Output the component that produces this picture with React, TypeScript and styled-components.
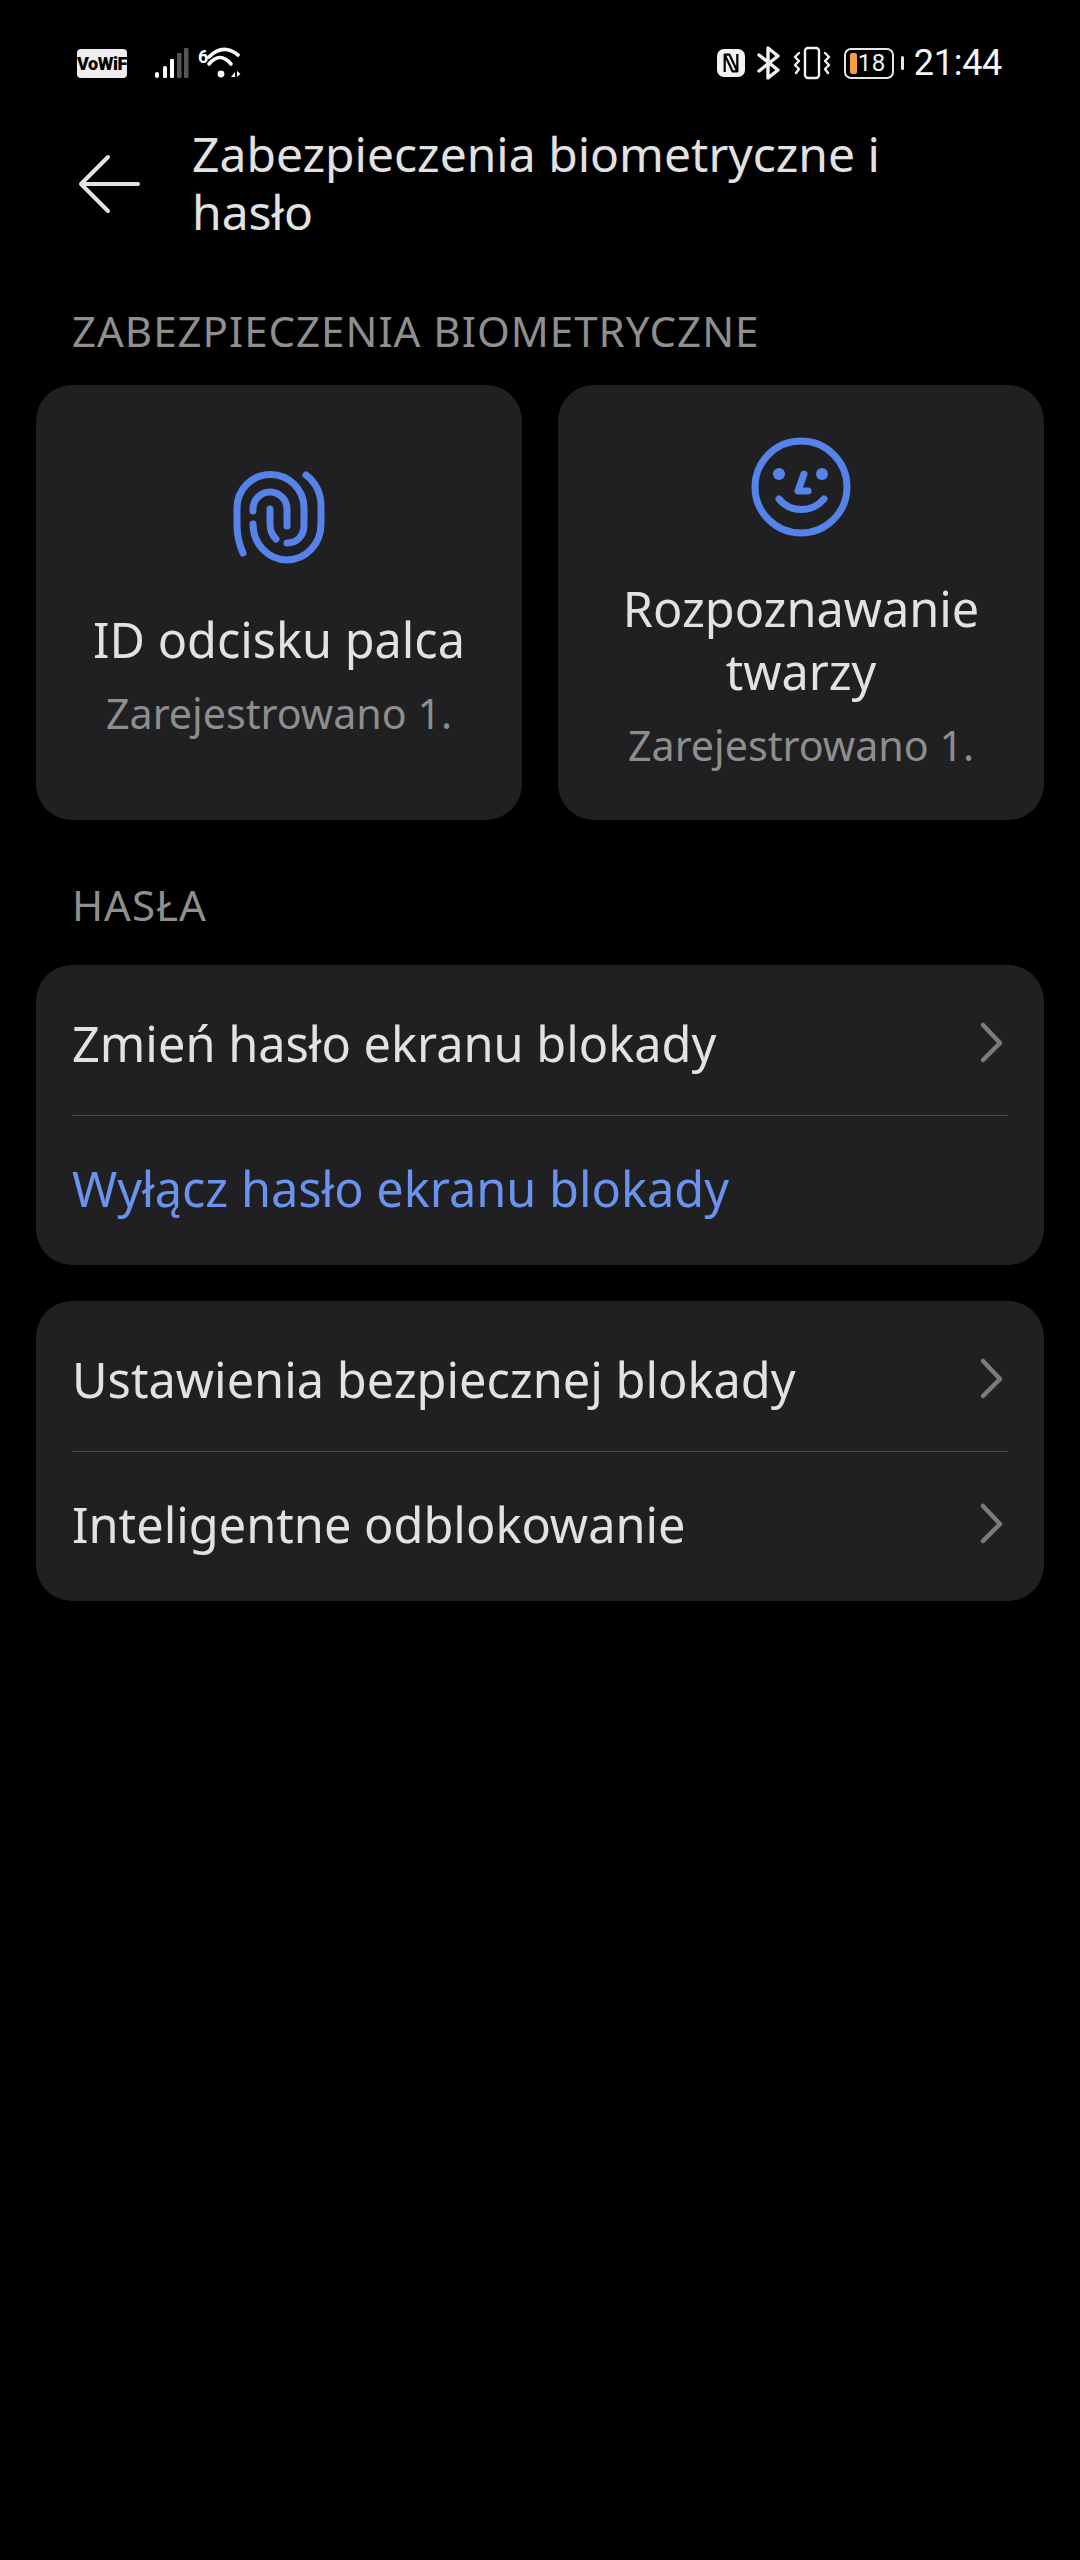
import * as React from 'react';
import styled, { createGlobalStyle } from 'styled-components';

const GlobalStyle = createGlobalStyle`
  html, body {
    margin: 0;
    padding: 0;
    background: #000;
  }
  body {
    font-family: "Noto Sans", Roboto, sans-serif;
  }
`;

const Page = styled.div`
  width: 1080px;
  height: 2560px;
  background: #000;
  overflow: hidden;
`;

const StatusBar = styled.div`
  display: flex;
  justify-content: space-between;
  align-items: center;
  height: 126px;
  padding: 0 78px 0 77px;
  box-sizing: border-box;
  color: #fff;
`;

const StatusGroup = styled.div`
  display: flex;
  align-items: center;
`;

const VoWifiBadge = styled.span`
  width: 50px;
  height: 29px;
  margin-right: 28px;
  border-radius: 4px;
  background: #eee;
  color: #000;
  font-family: Roboto, sans-serif;
  font-size: 18px;
  font-weight: 900;
  letter-spacing: -0.4px;
  line-height: 29px;
  text-align: center;
`;

const WifiBox = styled.div`
  position: relative;
  width: 46px;
  height: 34px;
  margin-left: 9px;
`;

const WifiSix = styled.span`
  position: absolute;
  left: 0;
  top: 2px;
  font-family: Roboto, sans-serif;
  font-size: 18px;
  font-weight: 700;
  line-height: 18px;
`;

const Battery = styled.div`
  position: relative;
  width: 50px;
  height: 31px;
  margin: 0 7px 0 13px;
  box-sizing: border-box;
  border: 2.5px solid #e6e6e6;
  border-radius: 7px;
`;

const BatteryFill = styled.span`
  position: absolute;
  left: 4px;
  top: 3px;
  bottom: 3px;
  width: 7px;
  border-radius: 2px;
  background: #f0a040;
`;

const BatteryLevel = styled.span`
  position: absolute;
  left: 12px;
  top: 0;
  font-family: Roboto, sans-serif;
  font-size: 24px;
  line-height: 26px;
  letter-spacing: 0.5px;
  color: #f2f2f2;
`;

const BatteryNub = styled.span`
  width: 3px;
  height: 14px;
  margin-right: 10px;
  border-radius: 2px;
  background: #e6e6e6;
`;

const Clock = styled.span`
  font-family: Roboto, sans-serif;
  font-size: 36px;
  letter-spacing: -0.3px;
  line-height: 40px;
  color: #f5f5f5;
`;

const Header = styled.header`
  display: flex;
  align-items: center;
  height: 116px;
  padding-left: 78px;
`;

const BackIcon = styled.svg`
  width: 64px;
  height: 60px;
  margin-right: 50px;
  flex: none;
`;

const Title = styled.h1`
  margin: 0 0 2px;
  width: 750px;
  font-size: 48px;
  font-weight: 400;
  line-height: 58px;
  color: #e2e2e2;
`;

const SectionLabel = styled.div<{ $top: number }>`
  margin: ${p => p.$top}px 0 0;
  padding-left: 72px;
  height: 50px;
  font-size: 42px;
  letter-spacing: 1px;
  line-height: 48px;
  color: #8f8f8f;
`;

const BioGrid = styled.div`
  display: grid;
  grid-template-columns: 1fr 1fr;
  gap: 36px;
  margin: 28px 36px 0;
`;

const BioCard = styled.div`
  display: flex;
  flex-direction: column;
  align-items: center;
  justify-content: center;
  height: 435px;
  padding-top: 3px;
  box-sizing: border-box;
  border-radius: 36px;
  background: #202022;
  text-align: center;
`;

const BioIcon = styled.svg`
  width: 100px;
  height: 100px;
  margin-bottom: 40px;
  flex: none;
`;

const BioTitle = styled.div`
  width: 440px;
  font-size: 48.6px;
  line-height: 63px;
  color: #e2e2e2;
`;

const BioSub = styled.div`
  margin-top: 15px;
  font-size: 41.2px;
  line-height: 54px;
  color: #8e8e8e;
`;

const ListCard = styled.div<{ $top: number }>`
  margin: ${p => p.$top}px 36px 0;
  border-radius: 36px;
  background: #202022;
`;

const Row = styled.div`
  display: flex;
  align-items: center;
  justify-content: space-between;
  height: 150px;
  margin: 0 36px;
  box-sizing: border-box;
  &:first-child {
    padding-top: 5px;
  }
  &:last-child {
    padding-bottom: 6px;
    border-top: 1px solid #4a4a4c;
  }
`;

const RowText = styled.span<{ $accent?: boolean }>`
  font-size: 48.7px;
  color: ${p => (p.$accent ? '#6a93ee' : '#e2e2e2')};
`;

const Chevron = styled.svg`
  width: 30px;
  height: 44px;
  flex: none;
`;

const Arrow = () => (
  <Chevron viewBox="0 0 30 44" fill="none" stroke="#7b7b7b" strokeWidth="4.5" strokeLinecap="round" strokeLinejoin="round">
    <path d="M5 4 L22 22 L5 39" />
  </Chevron>
);

const SignalIcon = () => (
  <svg width="34" height="30" viewBox="0 0 34 30">
    <rect x="0" y="24" width="4" height="6" rx="2" fill="#fff" />
    <rect x="8" y="18" width="4" height="12" rx="1.5" fill="#fff" />
    <rect x="15" y="11" width="4" height="19" rx="1" fill="#fff" />
    <rect x="22" y="5" width="4.5" height="25" rx="1" fill="#555" />
    <rect x="29" y="0" width="4.5" height="30" rx="1" fill="#555" />
  </svg>
);

const WifiIcon = () => (
  <svg width="46" height="34" viewBox="0 0 46 34" fill="none" stroke="#fff" strokeWidth="3.6" strokeLinecap="round" style={{ position: 'absolute', left: 0, top: 0 }}>
    <path d="M11 11 Q25 -3 40 9" />
    <path d="M11 18 Q22 5 33 18" />
    <circle cx="23" cy="28" r="3.4" fill="#fff" stroke="none" />
    <path d="M33 31 L37 26 V31 Z M39 25 V31 L42.5 28 Z" fill="#fff" stroke="none" />
  </svg>
);

const NfcIcon = () => (
  <svg width="28" height="28" viewBox="0 0 28 28" fill="none" stroke="#000" strokeWidth="2.2" strokeLinejoin="round" style={{ marginRight: 12 }}>
    <rect width="28" height="28" rx="7" fill="#f2f2f2" stroke="none" />
    <path d="M7.7 23 V5.7 H12.5 L20.3 22.3 H15.5 L7.7 5.7" />
    <path d="M20.3 5 V22.3" />
  </svg>
);

const BluetoothIcon = () => (
  <svg width="24" height="34" viewBox="0 0 24 34" fill="none" stroke="#f2f2f2" strokeWidth="3.4" strokeLinejoin="round" strokeLinecap="round" style={{ marginRight: 12 }}>
    <path d="M2 9 L21 24 L11 32 V2 L21 10 L2 25" />
  </svg>
);

const VibrateIcon = () => (
  <svg width="38" height="34" viewBox="0 0 38 34" fill="none" stroke="#f2f2f2" strokeWidth="2.4" strokeLinecap="round" strokeLinejoin="round">
    <rect x="12" y="2" width="14" height="30" rx="3" />
    <path d="M6 7 L2 11 L6 15 L2 19 L6 23 L3 27" />
    <path d="M32 7 L36 11 L32 15 L36 19 L32 23 L35 27" />
  </svg>
);

export default function App() {
  return (
    <Page>
      <GlobalStyle />
      <StatusBar>
        <StatusGroup>
          <VoWifiBadge>VoWiFi</VoWifiBadge>
          <SignalIcon />
          <WifiBox>
            <WifiSix>6</WifiSix>
            <WifiIcon />
          </WifiBox>
        </StatusGroup>
        <StatusGroup>
          <NfcIcon />
          <BluetoothIcon />
          <VibrateIcon />
          <Battery>
            <BatteryFill />
            <BatteryLevel>18</BatteryLevel>
          </Battery>
          <BatteryNub />
          <Clock>21:44</Clock>
        </StatusGroup>
      </StatusBar>

      <Header>
        <BackIcon viewBox="0 0 64 60" fill="none" stroke="#e4e4e4" strokeWidth="4" strokeLinecap="round" strokeLinejoin="round">
          <path d="M3 30 H60 M30 3 L3 30 L30 57" />
        </BackIcon>
        <Title>Zabezpieczenia biometryczne i hasło</Title>
      </Header>

      <SectionLabel $top={65}>ZABEZPIECZENIA BIOMETRYCZNE</SectionLabel>
      <BioGrid>
        <BioCard>
          <BioIcon viewBox="30 28 100 100" fill="none" stroke="#5583ea" strokeWidth="7" strokeLinecap="round">
            <path d="M44 113 C40 104 38 94 38 85 V68 A33.5 33.5 0 0 1 105 68 V85 C105 96 98 103 88 103" />
            <path d="M107 35 C116 42 122 52 122 66 V84 A34 36 0 0 1 54 84" />
            <path d="M54 71 V69 A17 17 0 0 1 88 69 V86" />
            <path d="M71 69 V84 C71 90 73 95 77 99" />
          </BioIcon>
          <BioTitle>ID odcisku palca</BioTitle>
          <BioSub>Zarejestrowano 1.</BioSub>
        </BioCard>
        <BioCard>
          <BioIcon viewBox="31 26 100 100" fill="none" stroke="#5583ea" strokeWidth="7" strokeLinecap="round" strokeLinejoin="round">
            <circle cx="81" cy="76" r="46" />
            <circle cx="59" cy="63" r="6" fill="#5583ea" stroke="none" />
            <circle cx="102" cy="63" r="6" fill="#5583ea" stroke="none" />
            <path d="M84 63 L78 80 H88" />
            <path d="M59 88 C70 102 92 102 104 88" />
          </BioIcon>
          <BioTitle>Rozpoznawanie twarzy</BioTitle>
          <BioSub>Zarejestrowano 1.</BioSub>
        </BioCard>
      </BioGrid>

      <SectionLabel $top={61}>HASŁA</SectionLabel>
      <ListCard $top={34}>
        <Row>
          <RowText>Zmień hasło ekranu blokady</RowText>
          <Arrow />
        </Row>
        <Row>
          <RowText $accent>Wyłącz hasło ekranu blokady</RowText>
        </Row>
      </ListCard>
      <ListCard $top={36}>
        <Row>
          <RowText>Ustawienia bezpiecznej blokady</RowText>
          <Arrow />
        </Row>
        <Row>
          <RowText>Inteligentne odblokowanie</RowText>
          <Arrow />
        </Row>
      </ListCard>
    </Page>
  );
}
